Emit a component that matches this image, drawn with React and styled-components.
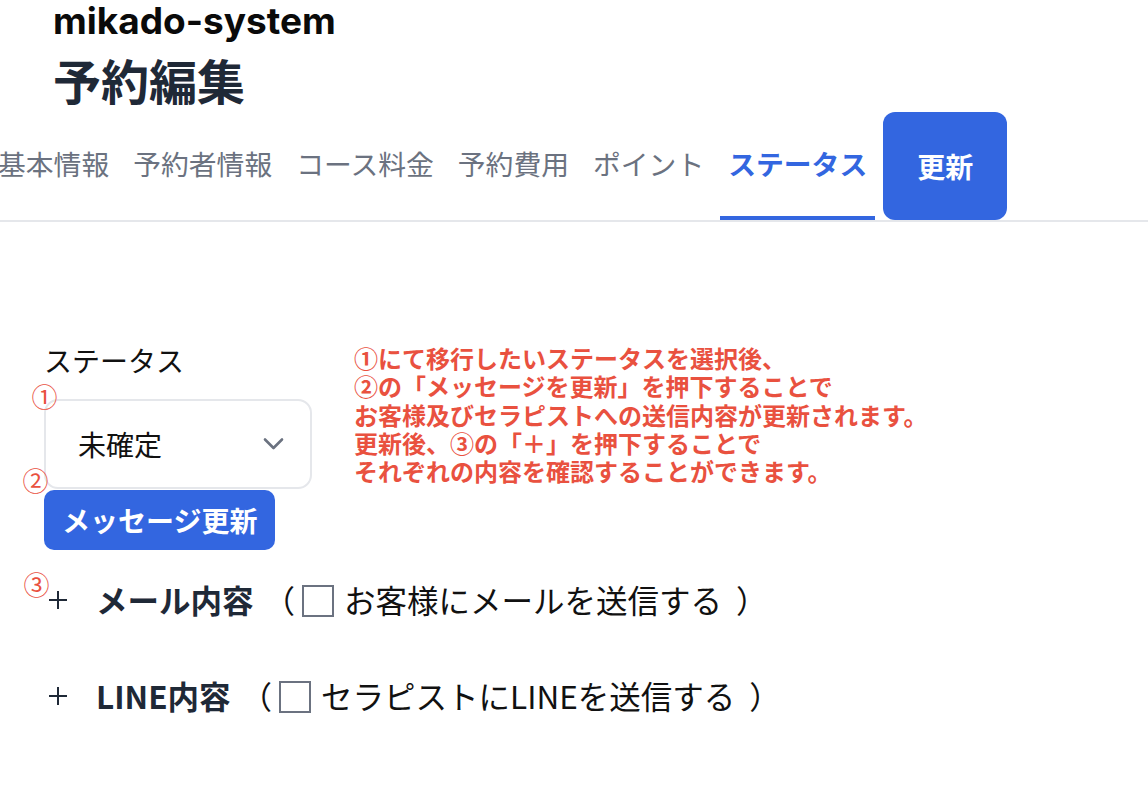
import React from 'react';
import styled, { createGlobalStyle } from 'styled-components';

const GlobalStyle = createGlobalStyle`
  html, body { margin: 0; padding: 0; background: #ffffff; }
  body {
    font-family: "Noto Sans CJK JP", "Noto Sans", sans-serif;
    color: #111111;
    overflow: hidden;
  }
  * { box-sizing: border-box; }
`;

const BLUE = '#3366e0';
const RED = '#e9513f';

const Page = styled.div`
  width: 1148px;
  min-height: 794px;
  overflow: hidden;
`;

const Header = styled.header`
  padding-left: 53px;
`;

const SiteName = styled.div`
  font-family: Inter, "Noto Sans", sans-serif;
  font-weight: 700;
  font-size: 37px;
  line-height: 42px;
  color: #0a0a0a;
`;

const PageTitle = styled.h1`
  margin: 13px 0 0;
  font-size: 48px;
  line-height: 48px;
  font-weight: 700;
  color: #1f2937;
`;

const TabBar = styled.nav`
  display: flex;
  align-items: stretch;
  gap: 8px;
  height: 110px;
  margin: 9px 0 0 -10px;
  border-bottom: 2px solid #e5e7eb;
`;

const Tab = styled.div`
  display: flex;
  align-items: center;
  padding: 0 8px;
  border-bottom: 4px solid ${p => (p.$active ? BLUE : 'transparent')};
  font-size: 27.8px;
  line-height: 1;
  font-weight: ${p => (p.$active ? 700 : 400)};
  color: ${p => (p.$active ? BLUE : '#6b7280')};
  white-space: nowrap;
`;

const SaveButton = styled.button`
  width: 124px;
  border: none;
  border-radius: 12px;
  background: ${BLUE};
  color: #ffffff;
  font-family: inherit;
  font-size: 28px;
  font-weight: 700;
  padding: 0;
  cursor: pointer;
`;

const Content = styled.main`
  padding: 117px 0 0 44px;
`;

const StatusRow = styled.section`
  display: flex;
  align-items: flex-start;
  gap: 42px;
`;

const StatusColumn = styled.div`
  display: flex;
  flex-direction: column;
  align-items: flex-start;
  width: 268px;
`;

const FieldLabel = styled.label`
  font-size: 28px;
  line-height: 42px;
  color: #111111;
  margin-bottom: 18px;
`;

const SelectBox = styled.div`
  position: relative;
  width: 268px;
  height: 90px;
  border: 2px solid #e5e7eb;
  border-radius: 14px;
  display: flex;
  align-items: center;
  justify-content: space-between;
  padding: 0 26px 0 32px;
  font-size: 28px;
  line-height: 1;
  color: #111111;
`;

const Mark = styled.span`
  position: absolute;
  left: ${p => p.$x}px;
  top: ${p => p.$y}px;
  font-size: 26px;
  line-height: 1;
  font-weight: 400;
  color: ${RED};
  z-index: 2;
`;

const MessageButton = styled.button`
  margin-top: 1px;
  height: 60px;
  padding: 0 18px;
  border: none;
  border-radius: 10px;
  background: ${BLUE};
  color: #ffffff;
  font-family: inherit;
  font-size: 28px;
  font-weight: 700;
  line-height: 1;
  white-space: nowrap;
  cursor: pointer;
`;

const Note = styled.p`
  margin: 5px 0 0;
  font-size: 24px;
  line-height: 28.25px;
  font-weight: 700;
  color: ${RED};
  white-space: nowrap;
`;

const Sections = styled.div`
  display: flex;
  flex-direction: column;
  gap: 48px;
  margin-top: 26px;
`;

const SectionRow = styled.div`
  position: relative;
  display: flex;
  align-items: center;
  height: 48px;
`;

const Toggle = styled.button`
  width: 28px;
  height: 28px;
  padding: 0 0 0 5px;
  border: none;
  background: transparent;
  display: flex;
  align-items: center;
  justify-content: flex-start;
  color: #1f2937;
  cursor: pointer;
`;

const SectionTitle = styled.h3`
  margin: 0 0 0 24px;
  font-size: 31.5px;
  line-height: 1;
  font-weight: 700;
  color: #1f2937;
  white-space: nowrap;
`;

const Paren = styled.span`
  font-size: 31.5px;
  line-height: 1;
  color: #111111;
  margin-left: ${p => p.$ml || 0}px;
`;

const CheckBox = styled.input.attrs({ type: 'checkbox' })`
  appearance: none;
  -webkit-appearance: none;
  width: 32px;
  height: 32px;
  margin: 2px 10px 0 ${p => p.$ml || 6}px;
  border: 2px solid #6b7280;
  border-radius: 0;
  background: #ffffff;
`;

const CheckLabel = styled.span`
  font-size: 31.5px;
  line-height: 1;
  color: #111111;
  white-space: nowrap;
`;

const PlusIcon = () => (
  <svg width="18" height="18" viewBox="0 0 18 18" fill="none" stroke="currentColor" strokeWidth="2" strokeLinecap="butt">
    <line x1="9" y1="0" x2="9" y2="18" />
    <line x1="0" y1="9" x2="18" y2="9" />
  </svg>
);

const Chevron = () => (
  <svg width="21" height="14" viewBox="0 0 21 14" fill="none" stroke="#6b7280" strokeWidth="2.6" strokeLinecap="round" strokeLinejoin="round">
    <polyline points="2,2.5 10.5,11 19,2.5" />
  </svg>
);

const tabs = ['基本情報', '予約者情報', 'コース料金', '予約費用', 'ポイント', 'ステータス'];

export default function App() {
  return (
    <Page>
      <GlobalStyle />
      <Header>
        <SiteName>mikado-system</SiteName>
        <PageTitle>予約編集</PageTitle>
      </Header>
      <TabBar>
        {tabs.map(t => (
          <Tab key={t} $active={t === 'ステータス'}>{t}</Tab>
        ))}
        <SaveButton>更新</SaveButton>
      </TabBar>
      <Content>
        <StatusRow>
          <StatusColumn>
            <FieldLabel>ステータス</FieldLabel>
            <SelectBox>
              <Mark $x={-14.5} $y={-18}>①</Mark>
              <span>未確定</span>
              <Chevron />
              <Mark $x={-23.5} $y={66}>②</Mark>
            </SelectBox>
            <MessageButton>メッセージ更新</MessageButton>
          </StatusColumn>
          <Note>
            ①にて移行したいステータスを選択後、<br />
            ②の「メッセージを更新」を押下することで<br />
            お客様及びセラピストへの送信内容が更新されます。<br />
            更新後、③の「＋」を押下することで<br />
            それぞれの内容を確認することができます。
          </Note>
        </StatusRow>
        <Sections>
          <SectionRow>
            <Mark $x={-20.5} $y={-5}>③</Mark>
            <Toggle aria-label="open"><PlusIcon /></Toggle>
            <SectionTitle>メール内容</SectionTitle>
            <Paren $ml={10}>（</Paren>
            <CheckBox $ml={7} />
            <CheckLabel>お客様にメールを送信する</CheckLabel>
            <Paren $ml={14}>）</Paren>
          </SectionRow>
          <SectionRow>
            <Toggle aria-label="open"><PlusIcon /></Toggle>
            <SectionTitle>LINE内容</SectionTitle>
            <Paren $ml={10}>（</Paren>
            <CheckBox $ml={7} />
            <CheckLabel>セラピストにLINEを送信する</CheckLabel>
            <Paren $ml={14}>）</Paren>
          </SectionRow>
        </Sections>
      </Content>
    </Page>
  );
}
